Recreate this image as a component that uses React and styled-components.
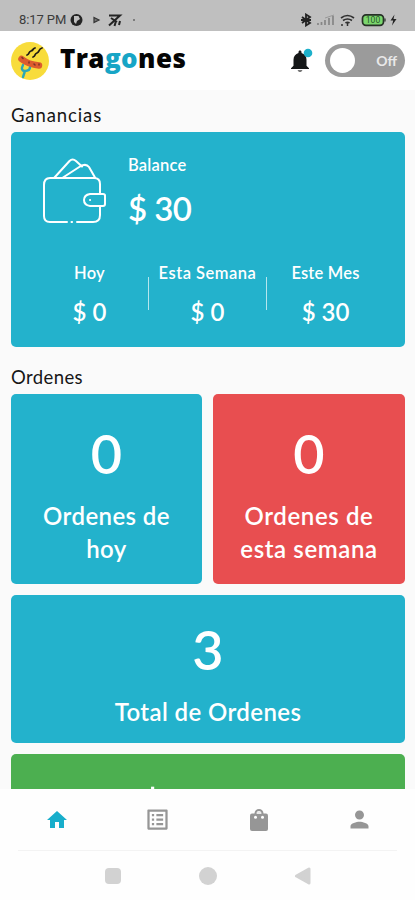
import React from 'react';
import styled, { createGlobalStyle } from 'styled-components';
import { MdHome, MdListAlt, MdPerson } from 'react-icons/md'

const GlobalStyle = createGlobalStyle`
  * { box-sizing: border-box; }
  body {
    margin: 0;
    background: #fafafa;
    font-family: Lato, "Liberation Sans", sans-serif;
  }
  svg { display: block; flex: none; }
`

const Screen = styled.div`
  width: 415px;
  height: 900px;
  display: flex;
  flex-direction: column;
  overflow: hidden;
  background: #fafafa;
`

const StatusBar = styled.div`
  height: 31px;
  flex: none;
  display: flex;
  align-items: center;
  justify-content: space-between;
  padding: 8px 18px 0 19px;
  background: #bfbfbf;
  color: #3c3c3c;
  font: 13px Roboto, sans-serif;
`

const StatusGroup = styled.div`
  display: flex;
  align-items: center;
`

const Clock = styled.span`
  width: 51px;
  letter-spacing: -0.1px;
  white-space: nowrap;
`

const Header = styled.header`
  height: 59px;
  flex: none;
  display: flex;
  align-items: center;
  padding: 0 10px 0 11px;
  background: #fff;
`

const Brand = styled.h1`
  margin: 0 auto 6px 11px;
  color: #050505;
  font-family: "Open Sans", sans-serif;
  font-size: 26px;
  font-weight: 800;
  line-height: 32px;
  letter-spacing: 0.4px;

  span {
    color: #17a5c6;
  }
`

const Toggle = styled.div`
  width: 80px;
  height: 33px;
  margin-left: 12px;
  padding: 0 8px 0 5px;
  display: flex;
  align-items: center;
  justify-content: space-between;
  border-radius: 17px;
  background: #9b9b9b;
  color: #e9e9e9;
  font-size: 14px;
  font-weight: 700;
`

const Knob = styled.span`
  width: 25px;
  height: 25px;
  border-radius: 50%;
  background: #fff;
`

const Content = styled.main`
  flex: 1;
  min-height: 0;
  overflow: hidden;
  padding: 0 10px 0 11px;
`

const SectionTitle = styled.h2`
  height: ${p => p.$height};
  margin: 0;
  padding-top: ${p => p.$top};
  color: #161616;
  font-size: 18.5px;
  font-weight: 400;
  line-height: 24px;
  letter-spacing: ${p => p.$spacing};
`

const EarningsCard = styled.section`
  height: 215px;
  border-radius: 5px;
  background: #23b2cc;
  color: #fff;
`

const BalanceRow = styled.div`
  height: 124px;
  display: flex;
  padding: 21px 0 0 31px;

  > svg {
    margin-top: 5px;
  }
`

const Balance = styled.div`
  margin-left: 21px;
`

const Label = styled.div`
  font-size: 16.5px;
  font-weight: 600;
  line-height: 24px;
  letter-spacing: ${p => p.$spacing || '0.2px'};
  white-space: nowrap;
`

const Amount = styled.div`
  margin-top: ${p => p.$large ? '9px' : '12px'};
  font-size: ${p => p.$large ? '33px' : '24px'};
  font-weight: 600;
  line-height: ${p => p.$large ? '44px' : '30px'};
  letter-spacing: ${p => p.$large ? '-0.6px' : '0'};
`

const Periods = styled.div`
  display: grid;
  grid-template-columns: 117px 1px 117px 1px 117px;
  justify-content: start;
  padding-left: 20px;
  text-align: center;
`

const Period = styled.div`
  padding-top: 5px;
`

const Divider = styled.span`
  width: 1px;
  height: 33px;
  margin-top: 21px;
  background: #b5e6ee;
`

const Stats = styled.div`
  display: grid;
  grid-template-columns: 191px 192px;
  grid-template-rows: 190px 148px 148px;
  gap: 11px;
`

const StatCard = styled.section`
  grid-column: ${p => p.$wide ? '1 / -1' : 'auto'};
  padding-top: ${p => p.$wide ? '25px' : '30px'};
  border-radius: 5px;
  background: ${p => p.$color};
  color: #fff;
  text-align: center;
`

const StatNumber = styled.div`
  font-size: 54px;
  font-weight: 600;
  line-height: 60px;
`

const StatMoney = styled(StatNumber)`
  font-family: Inter, sans-serif;
  font-size: 53px;
  font-weight: 900;
  line-height: 67px;
  letter-spacing: -4.3px;
`

const StatLabel = styled.div`
  margin-top: 16px;
  font-size: 24px;
  font-weight: 600;
  line-height: 32.5px;
  letter-spacing: ${p => p.$spacing || '0.4px'};
  white-space: pre-line;
`

const TabBar = styled.nav`
  height: 61px;
  flex: none;
  display: grid;
  grid-template-columns: repeat(4, 101px);
  padding-left: 6px;
  place-items: center;
  background: #fefefe;
  color: #969696;
`

const Tab = styled.a`
  color: ${p => p.$active ? '#18aecb' : 'inherit'};
`

const SystemNav = styled.div`
  height: 50px;
  flex: none;
  padding: 0 18px;
  background: #fefefe;
`

const SystemButtons = styled.div`
  height: 50px;
  display: flex;
  justify-content: space-between;
  padding: 16px 85px 0 86px;
  border-top: 1px solid #f3f3f3;
`

const Logo = () => (
  <svg width="38" height="38" viewBox="0 0 38 38">
    <circle cx="19" cy="19" r="19" fill="#f8dc3b" />
    <path d="M12 23c-2 4-1 6 2 6 3 0 5-1 5-4M14 29l-2 6" fill="none" stroke="#2aa7b5" strokeWidth="2.400" strokeLinecap="round" />
    <path d="M10.500 17q7 5.500 17.500 6.500" fill="none" stroke="#dc5c2e" strokeWidth="6.500" strokeLinecap="round" />
    <path d="M11 15.500l1 1M18 20v1M23 22l1 1M28 22v1" stroke="#7c3327" strokeWidth="1.500" strokeLinecap="round" />
    <path d="M16 13c3-1 1-3 4-4s1-2 4-3M22 15c3-1 1-3 4-4s1-4 5-5" fill="none" stroke="#201d16" strokeWidth="1.800" strokeLinecap="round" />
  </svg>
)

const Bell = () => (
  <svg width="24" height="26" viewBox="0 0 24 26">
    <path d="M8.600 22h4.800c-.5 1.500-1.200 2.100-2.400 2.100S9.100 23.500 8.600 22z" fill="#777" />
    <path d="M11 2.600c.8 0 1.500.6 1.500 1.500v.8c3 .8 5 3.300 5 6.800v6.100l2.500 2.500V21H2v-.7l2.500-2.500v-6.100c0-3.500 2-6 5-6.800v-.8c0-.9.7-1.500 1.500-1.500z" fill="#151718" />
    <circle cx="19" cy="5" r="4.300" fill="#1cb0ca" />
  </svg>
)

const Wallet = () => (
  <svg width="65" height="67" viewBox="0 0 65 67" fill="none" stroke="#fff" strokeWidth="2" strokeLinecap="round" strokeLinejoin="round">
    <path d="M25 64H8q-6 0-6-6V27q0-7 6-7h44q6 0 6 6v10M58 48v9q0 7-7 7H35M29.500 64h.6" />
    <path d="M63 37.500v8.500q0 2-2 2H48q-6-1-6-6t6-6h13q2 0 2 1.500zM48 42h.1" />
    <path d="M12.500 19.500L27.500 3q3-3 6.500 0l6 5.500M21 19.500L38 8.500q6-3.500 9 .5l6 10.500" />
  </svg>
)

const Bag = () => (
  <svg width="18" height="22" viewBox="0 0 18 22">
    <path d="M5.500 7V4.500a3.500 3.500 0 0 1 7 0V7" fill="none" stroke="#969696" strokeWidth="2" />
    <rect y="4.500" width="18" height="17.500" rx="2" fill="#969696" />
    <path d="M6.800 5v-.5a2.200 2.200 0 0 1 4.400 0V5z" fill="#e8e8e8" />
    <circle cx="5.500" cy="8.300" r="1.500" fill="#fff" />
    <circle cx="12.500" cy="8.300" r="1.500" fill="#fff" />
  </svg>
)

const StatusLeftIcons = () => (
  <svg width="70" height="14" viewBox="0 0 70 14">
    <circle cx="6.500" cy="7" r="6" fill="#242424" />
    <path d="M4 3h4.500l1.500 3-3 2-1 3-2-2z" fill="#bfbfbf" />
    <path d="M24 4.500l5 2.500-5 2.500z" fill="#777" stroke="#333" strokeWidth="1.200" />
    <path d="M39 2.500h11L39 12.500M41 5l6 4M46 8l-1.500 5M50 8l-1 4" fill="none" stroke="#242424" strokeWidth="2" />
    <circle cx="64" cy="7" r="1" fill="#666" />
  </svg>
)

const StatusRightIcons = () => (
  <svg width="98" height="14" viewBox="0 0 98 14">
    <path d="M3 4l8 6-4 2.500V1.500L11 4l-8 6M2 7h10" fill="none" stroke="#222" strokeWidth="1.800" />
    <path d="M19 12v-2M22.500 12V9M26 12V7M30 12V5M34 12V3" stroke="#858585" strokeWidth="1.700" />
    <path d="M26 5l9-3" stroke="#999" />
    <path d="M42 5q6.500-5 13 0M44 7.500q4.500-3 9 0M46.500 10q2-1.500 4 0" fill="none" stroke="#303030" strokeWidth="1.700" />
    <path d="M43 11v2M48.500 9v4" stroke="#303030" strokeWidth="1.500" />
    <rect x="63.500" y="1.800" width="21" height="10.500" rx="3.500" fill="#7bd66e" stroke="#273127" strokeWidth="1.700" />
    <path d="M86 5.500v3" stroke="#273127" strokeWidth="1.200" />
    <text x="74" y="10.200" textAnchor="middle" fontFamily="Roboto" fontSize="8.500" fill="#285a27">100</text>
    <path d="M95.500 1.500l-4 6h2.700l-1.200 5 4.500-6.500h-3z" fill="#222" />
  </svg>
)

const periods = [
  { label: 'Hoy', amount: '$ 0' },
  { label: 'Esta Semana', amount: '$ 0', spacing: '0.5px' },
  { label: 'Este Mes', amount: '$ 30' },
]

const App = () => {
  return (
    <Screen>
      <GlobalStyle />
      <StatusBar>
        <StatusGroup>
          <Clock>8:17 PM</Clock>
          <StatusLeftIcons />
        </StatusGroup>
        <StatusRightIcons />
      </StatusBar>
      <Header>
        <Logo />
        <Brand>Tra<span>go</span>nes</Brand>
        <Bell />
        <Toggle><Knob />Off</Toggle>
      </Header>
      <Content>
        <SectionTitle $height="42px" $top="13px" $spacing="0.9px">Ganancias</SectionTitle>
        <EarningsCard>
          <BalanceRow>
            <Wallet />
            <Balance>
              <Label>Balance</Label>
              <Amount $large>$ 30</Amount>
            </Balance>
          </BalanceRow>
          <Periods>
            {periods.map((p, i) => (
              <React.Fragment key={p.label}>
                {i > 0 && <Divider />}
                <Period>
                  <Label $spacing={p.spacing}>{p.label}</Label>
                  <Amount>{p.amount}</Amount>
                </Period>
              </React.Fragment>
            ))}
          </Periods>
        </EarningsCard>
        <SectionTitle $height="47px" $top="18px" $spacing="0.4px">Ordenes</SectionTitle>
        <Stats>
          <StatCard $color="#23b2cc">
            <StatNumber>0</StatNumber>
            <StatLabel>{'Ordenes de\nhoy'}</StatLabel>
          </StatCard>
          <StatCard $color="#e84e50">
            <StatNumber>0</StatNumber>
            <StatLabel $spacing="0.6px">{'Ordenes de\nesta semana'}</StatLabel>
          </StatCard>
          <StatCard $wide $color="#23b2cc">
            <StatNumber>3</StatNumber>
            <StatLabel>Total de Ordenes</StatLabel>
          </StatCard>
          <StatCard $wide $color="#4caf50">
            <StatMoney>$ 30.0</StatMoney>
          </StatCard>
        </Stats>
      </Content>
      <TabBar>
        <Tab $active><MdHome size={24} /></Tab>
        <Tab><MdListAlt size={27} /></Tab>
        <Tab><Bag /></Tab>
        <Tab><MdPerson size={27} /></Tab>
      </TabBar>
      <SystemNav>
        <SystemButtons>
          <svg width="18" height="18" viewBox="0 0 18 18"><rect x="1" y="1" width="16" height="16" rx="4" fill="#d2d2d2" /></svg>
          <svg width="18" height="18" viewBox="0 0 18 18"><circle cx="9" cy="9" r="9" fill="#d2d2d2" /></svg>
          <svg width="18" height="18" viewBox="0 0 18 18"><path d="M2.500 9L15 2v14z" fill="#d2d2d2" stroke="#d2d2d2" strokeWidth="3" strokeLinejoin="round" /></svg>
        </SystemButtons>
      </SystemNav>
    </Screen>
  )
}

export default App
